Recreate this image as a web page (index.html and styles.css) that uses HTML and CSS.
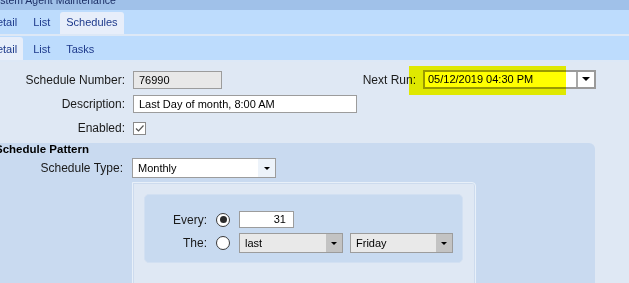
FILE: index.html
```html
<!DOCTYPE html>
<html lang="en">

<head>
  <meta charset="UTF-8">
  <meta name="viewport" content="width=device-width, initial-scale=1.0">
  <title>System Agent Maintenance</title>
  <link rel="stylesheet" href="styles.css">
</head>

<body>
  <div class="title-bar"><span class="title-text">System Agent Maintenance</span></div>

  <div class="tabs">
    <span class="tab">Detail</span>
    <span class="tab">List</span>
    <span class="tab active">Schedules</span>
  </div>
  <div class="tabs tabs-sub">
    <span class="tab active">Detail</span>
    <span class="tab">List</span>
    <span class="tab">Tasks</span>
  </div>

  <div class="content">
    <div class="row">
      <label class="label">Schedule Number:</label>
      <div class="field readonly">76990</div>
      <div class="next-run">
        <label class="label next-label">Next Run:</label>
        <div class="select next-select">
          <span class="select-text">05/12/2019 04:30 PM</span>
          <span class="select-btn"><span class="arrow big"></span></span>
          <div class="highlight"></div>
        </div>
      </div>
    </div>
    <div class="row">
      <label class="label">Description:</label>
      <div class="field desc">Last Day of month, 8:00 AM</div>
    </div>
    <div class="row">
      <label class="label">Enabled:</label>
      <span class="checkbox">
        <svg width="11" height="11" viewBox="0 0 11 11"><path d="M2 5.5 L4.5 8 L9.5 2.5" fill="none" stroke="#555" stroke-width="1.2"/></svg>
      </span>
    </div>

    <div class="pattern">
      <div class="pattern-title">Schedule Pattern</div>
      <div class="pattern-row">
        <label class="label">Schedule Type:</label>
        <div class="select type-select">
          <span class="select-text">Monthly</span>
          <span class="select-btn"><span class="arrow"></span></span>
        </div>
      </div>

      <div class="recur">
        <div class="recur-box">
          <div class="recur-row">
            <label class="label">Every:</label>
            <span class="radio on"></span>
            <div class="field every">31</div>
          </div>
          <div class="recur-row">
            <label class="label">The:</label>
            <span class="radio"></span>
            <div class="select gray week-select">
              <span class="select-text">last</span>
              <span class="select-btn"><span class="arrow"></span></span>
            </div>
            <div class="select gray day-select">
              <span class="select-text">Friday</span>
              <span class="select-btn"><span class="arrow"></span></span>
            </div>
          </div>
        </div>
      </div>
    </div>
  </div>
</body>

</html>
```

FILE: styles.css
```css
* {
  box-sizing: border-box;
}

body {
  margin: 0;
  width: 629px;
  height: 283px;
  overflow: hidden;
  background: #dfe8f4;
  font-family: "Liberation Sans", Arial, sans-serif;
  color: #1a1a1a;
}

.title-bar {
  height: 10px;
  background: #a0c1e9;
  overflow: hidden;
}

.title-text {
  display: block;
  margin: -7px 0 0 -12px;
  font-size: 10.5px;
  line-height: 14px;
  color: #1c2f66;
  white-space: nowrap;
}

.tabs {
  display: flex;
  align-items: flex-end;
  gap: 4px;
  height: 26px;
  background: #bddcfd;
  border-bottom: 2px solid #dde8f6;
}

.tab {
  padding: 0 6px;
  height: 22px;
  font-size: 11px;
  line-height: 21px;
  color: #1e3a8c;
  border-radius: 3px 3px 0 0;
}

.tab:first-child {
  margin-left: -17px;
}

.tab.active {
  background: #e7eefa;
}

.tabs-sub .tab {
  height: 23px;
  padding-top: 2px;
}

.content {
  padding-top: 9px;
}

.row {
  display: flex;
  align-items: center;
  gap: 8px;
  height: 18px;
  margin-bottom: 6px;
}

.label {
  flex: none;
  width: 125px;
  text-align: right;
  font-size: 12px;
  color: #1a1a1a;
}

.field {
  height: 18px;
  border: 1px solid #9c9c9c;
  background: #fff;
  font-size: 11px;
  line-height: 16px;
  padding: 0 5px;
  color: #000;
}

.field.readonly {
  width: 89px;
  background: #e8e8e8;
}

.field.desc {
  width: 224px;
}

.checkbox {
  width: 13px;
  height: 13px;
  border: 1px solid #8a8a8a;
  background: #fff;
  display: flex;
}

.next-run {
  display: flex;
  align-items: center;
  gap: 7px;
  margin-left: 66px;
}

.next-label {
  width: 120px;
}

.select {
  display: flex;
  height: 20px;
  border: 1px solid #9c9c9c;
  background: #fff;
  font-size: 11px;
  color: #000;
}

.select-text {
  flex: 1;
  padding-left: 5px;
  line-height: 18px;
  white-space: nowrap;
}

.select-btn {
  width: 17px;
  display: flex;
  align-items: center;
  justify-content: center;
}

.arrow {
  border-left: 3px solid transparent;
  border-right: 3px solid transparent;
  border-top: 3px solid #000;
}

.arrow.big {
  border-left-width: 4px;
  border-right-width: 4px;
  border-top-width: 4px;
}

.next-select {
  position: relative;
  width: 173px;
  height: 19px;
  margin-top: -2px;
  border: 2px solid #9a9a9a;
}

.next-select .select-text {
  line-height: 15px;
  padding-left: 3px;
}

.next-select .select-btn {
  width: 18px;
  border-left: 2px solid #a8a8a8;
}

.highlight {
  position: absolute;
  left: -16px;
  top: -6px;
  width: 157px;
  height: 29px;
  background: #ffff00;
  mix-blend-mode: multiply;
}

.pattern {
  margin: 6px 0 0 -10px;
  width: 605px;
  height: 150px;
  background: #c9daf0;
  border-top-right-radius: 6px;
}

.pattern-title {
  padding-left: 5px;
  font-size: 11.5px;
  font-weight: bold;
  line-height: 13px;
  color: #000;
}

.pattern-row {
  display: flex;
  align-items: center;
  gap: 9px;
  height: 20px;
  margin-top: 2px;
}

.pattern-row .label {
  width: 133px;
}

.type-select {
  width: 144px;
}

.type-select .select-btn {
  background: #edf3fa;
}

.recur {
  margin: 4px 0 0 142px;
  width: 344px;
  height: 120px;
  padding: 11px;
  background: #dfe8f4;
  border: 1px solid #e8f0f9;
  border-top-right-radius: 4px;
  box-shadow: inset 1px 1px 0 #cddbee, inset -1px 0 0 #cddbee;
}

.recur-box {
  width: 319px;
  padding: 16px 0 9px;
  background: #c8daf0;
  border: 1px solid #d2e0f2;
  border-radius: 5px;
}

.recur-row {
  display: flex;
  align-items: center;
  height: 17px;
}

.recur-row + .recur-row {
  height: 20px;
  margin-top: 5px;
}

.recur-row .label {
  width: 62px;
}

.radio {
  flex: none;
  width: 14px;
  height: 14px;
  margin: 0 9px 0 9px;
  border: 1.5px solid #3a3a3a;
  border-radius: 50%;
  background: #fff;
  display: flex;
  align-items: center;
  justify-content: center;
}

.radio.on::after {
  content: "";
  width: 7px;
  height: 7px;
  border-radius: 50%;
  background: #2a2a2a;
}

.field.every {
  width: 55px;
  height: 17px;
  line-height: 15px;
  text-align: right;
  padding-right: 7px;
}

.select.gray {
  background: #e9e9e9;
}

.gray .select-btn {
  width: 16px;
  background: #c3c3c3;
}

.week-select {
  width: 104px;
}

.day-select {
  width: 103px;
  margin-left: 7px;
}
```
